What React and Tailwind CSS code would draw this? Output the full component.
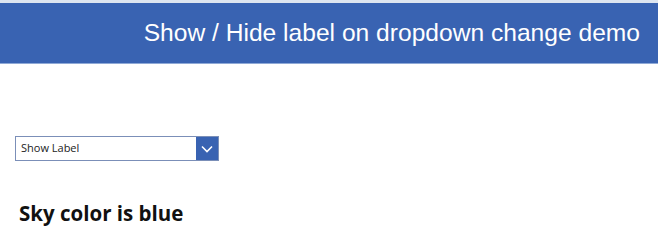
import { useState } from "react";

const App = () => {
  const [choice, setChoice] = useState("show");

  return (
    <div className="w-[658px] h-[243px] bg-white overflow-hidden">
      <div className="h-[3px] bg-[#dde5f0]"></div>
      <div className="h-[61px] bg-[#3963b2] flex items-center justify-end pr-[18px] border-b border-[#8fa9d6]">
        <h1 className="text-white text-[24.6px] font-['Liberation_Sans',Arial,sans-serif] leading-none mt-[1px]">
          Show / Hide label on dropdown change demo
        </h1>
      </div>

      <div className="pl-[15px] pt-[72px]">
        <div className="relative w-[204px] h-[25px] border border-[#7b8fb8] bg-white flex">
          <select
            value={choice}
            onChange={(e) => setChoice(e.target.value)}
            className="appearance-none flex-1 h-full pl-[5px] text-[11px] text-[#222] bg-transparent outline-none font-['Open_Sans',sans-serif]"
          >
            <option value="show">Show Label</option>
            <option value="hide">Hide Label</option>
          </select>
          <div className="w-[22px] h-full bg-[#3963b2] flex items-center justify-center pointer-events-none">
            <svg width="12" height="8" viewBox="0 0 12 8" fill="none">
              <path d="M1 1.5 L6 6.5 L11 1.5" stroke="white" strokeWidth="1.6" />
            </svg>
          </div>
        </div>

        {choice === "show" && (
          <p className="mt-[42px] pl-[4px] text-[20.5px] font-bold text-[#111] font-['Open_Sans',sans-serif] leading-none">
            Sky color is blue
          </p>
        )}
      </div>
    </div>
  );
};

export default App;
